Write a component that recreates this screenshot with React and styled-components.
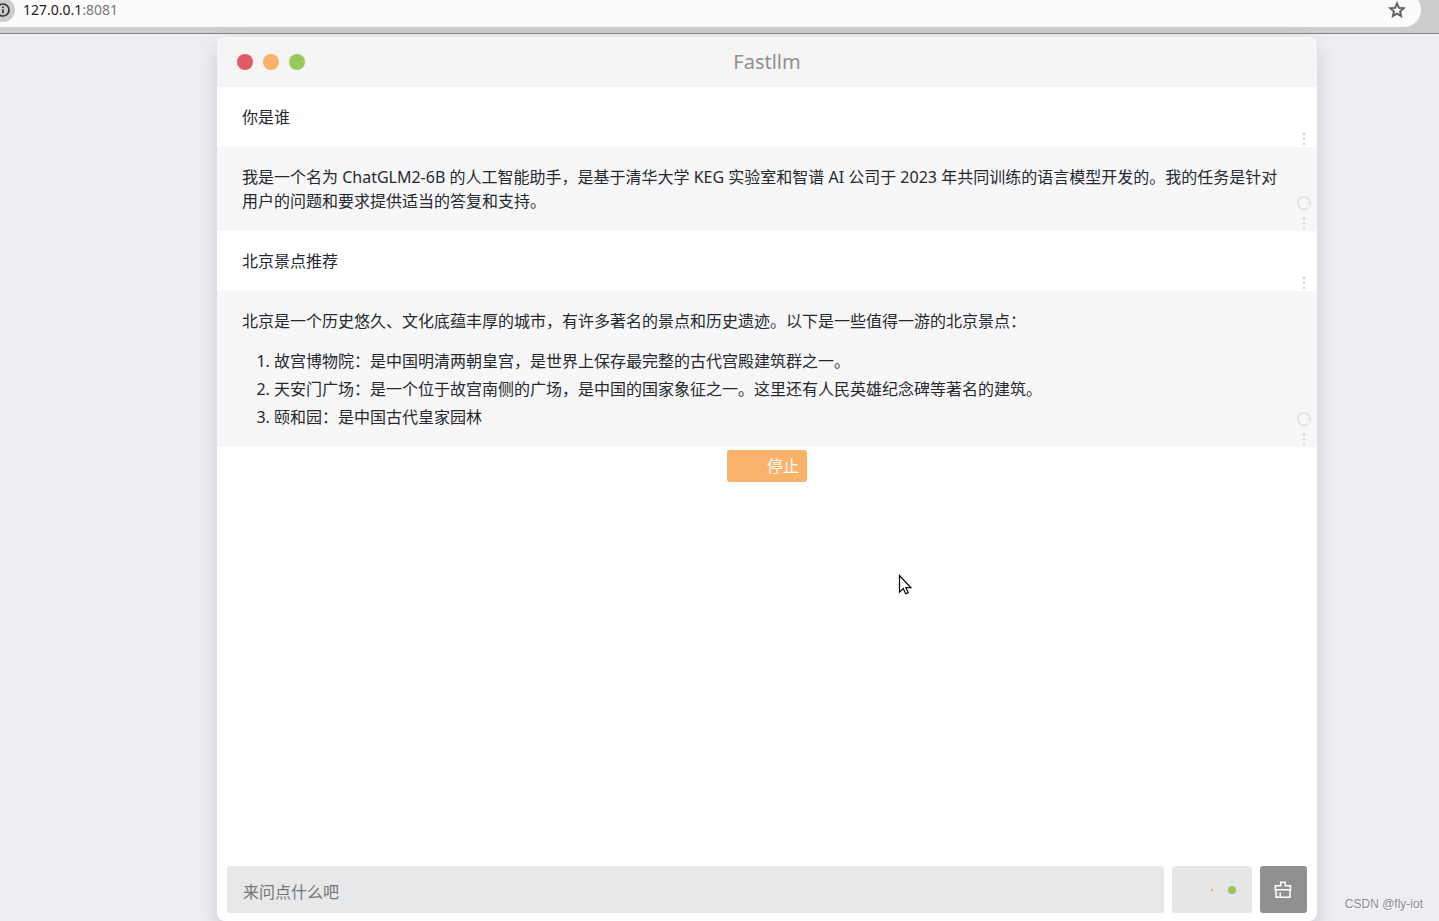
import React, { useState } from 'react';
import styled, { createGlobalStyle } from 'styled-components';

const messages = [
    { id: 1, role: 'user', text: '你是谁' },
    {
        id: 2,
        role: 'assistant',
        text: '我是一个名为 ChatGLM2-6B 的人工智能助手，是基于清华大学 KEG 实验室和智谱 AI 公司于 2023 年共同训练的语言模型开发的。我的任务是针对用户的问题和要求提供适当的答复和支持。',
    },
    { id: 3, role: 'user', text: '北京景点推荐' },
    {
        id: 4,
        role: 'assistant',
        text: '北京是一个历史悠久、文化底蕴丰厚的城市，有许多著名的景点和历史遗迹。以下是一些值得一游的北京景点：',
        items: [
            '故宫博物院：是中国明清两朝皇宫，是世界上保存最完整的古代宫殿建筑群之一。',
            '天安门广场：是一个位于故宫南侧的广场，是中国的国家象征之一。这里还有人民英雄纪念碑等著名的建筑。',
            '颐和园：是中国古代皇家园林',
        ],
    },
];

const InfoIcon = () => (
    <svg width="14" height="14" viewBox="0 0 14 14" fill="none" stroke="#333" strokeWidth="1.7">
        <circle cx="7" cy="7" r="6" />
        <path d="M7 6.2v4M7 3.4v1.7" />
    </svg>
);

const StarIcon = () => (
    <svg width="20" height="20" viewBox="0 0 24 24" fill="#5a5a5a" stroke="#5a5a5a" strokeWidth="0.7">
        <path d="M22 9.24l-7.19-.62L12 2 9.19 8.63 2 9.24l5.46 4.73L5.82 21 12 17.27 18.18 21l-1.63-7.03L22 9.24zM12 15.4l-3.76 2.27 1-4.28-3.32-2.88 4.38-.38L12 6.1l1.71 4.04 4.38.38-3.32 2.88 1 4.28L12 15.4z" />
    </svg>
);

const RefreshIcon = () => (
    <svg width="16" height="16" viewBox="0 0 16 16" fill="none" stroke="#dedede" strokeWidth="1.5">
        <path d="M12.2 12.7A6.2 6.2 0 1 1 14.2 8.2" />
        <path d="M10.8 7.4h4.4v3.6z" fill="#dedede" stroke="none" />
    </svg>
);

const DotsIcon = () => (
    <svg width="16" height="16" viewBox="0 0 16 16" fill="#dcdcdc">
        <circle cx="8" cy="3.2" r="1.4" />
        <circle cx="8" cy="8" r="1.4" />
        <circle cx="8" cy="12.8" r="1.4" />
    </svg>
);

const BrushIcon = () => (
    <svg width="19" height="18" viewBox="0 0 19 18" fill="none" stroke="#fff" strokeWidth="1.5">
        <path d="M6.8 4.7V1.3h4.4v3.4h5.3v4H1.3v-4zM2 8.7v7.6h14V8.7M6.2 16v-4.4" />
    </svg>
);

const PointerIcon = () => (
    <svg width="14" height="22" viewBox="0 0 14 22" fill="#fff" stroke="#000" strokeWidth="1.2">
        <path d="M1.5 1.5v16.6l3.7-3.5 2.5 5.2 2.6-1.2-2.5-5h5z" />
    </svg>
);

const Message = ({ message }) => (
    <MessageRow $role={message.role}>
        <p>{message.text}</p>
        {message.items && (
            <ol>
                {message.items.map((item) => (
                    <li key={item}>{item}</li>
                ))}
            </ol>
        )}
        <MessageTools>
            {message.role === 'assistant' && (
                <ToolButton type="button" aria-label="重新生成">
                    <RefreshIcon />
                </ToolButton>
            )}
            <ToolButton type="button" aria-label="更多">
                <DotsIcon />
            </ToolButton>
        </MessageTools>
    </MessageRow>
);

const App = () => {
    const [question, setQuestion] = useState('');

    return (
        <>
            <GlobalStyle />
            <Screen>
                <BrowserBar>
                    <AddressBox>
                        <SiteInfo type="button" aria-label="网站信息">
                            <InfoIcon />
                        </SiteInfo>
                        <Address>
                            127.0.0.1<Port>:8081</Port>
                        </Address>
                        <PlainButton type="button" aria-label="收藏">
                            <StarIcon />
                        </PlainButton>
                    </AddressBox>
                </BrowserBar>
                <Page>
                    <Window>
                        <TitleBar>
                            <Lights>
                                <Light $color="#e15a64" />
                                <Light $color="#f8b26a" />
                                <Light $color="#99c959" />
                            </Lights>
                            <Title>Fastllm</Title>
                        </TitleBar>
                        <Messages>
                            {messages.map((message) => (
                                <Message key={message.id} message={message} />
                            ))}
                            <StopButton type="button">停止</StopButton>
                        </Messages>
                        <Composer onSubmit={(e) => e.preventDefault()}>
                            <QuestionInput
                                type="text"
                                aria-label="来问点什么吧"
                                placeholder="来问点什么吧"
                                value={question}
                                onChange={(e) => setQuestion(e.target.value)}
                            />
                            <SendButton type="submit" aria-label="发送">
                                <LoadingDot $size={2} $color="#f8b26a" />
                                <LoadingDot $size={8} $color="#99c959" />
                            </SendButton>
                            <ClearButton type="button" aria-label="清空">
                                <BrushIcon />
                            </ClearButton>
                        </Composer>
                    </Window>
                </Page>
                <Pointer>
                    <PointerIcon />
                </Pointer>
                <Watermark>CSDN @fly-iot</Watermark>
            </Screen>
        </>
    );
};

const GlobalStyle = createGlobalStyle`
    * {
        box-sizing: border-box;
    }

    body {
        margin: 0;
        background: #edeef2;
        color: #24292f;
        font: 16px/24px "Noto Sans", "Noto Sans CJK SC", sans-serif;
    }

    button, input {
        font: inherit;
    }

    svg {
        display: block;
    }
`;

const Screen = styled.div`
    position: relative;
    display: flex;
    flex-direction: column;
    min-height: 100vh;
    overflow: hidden;
`;

const PlainButton = styled.button`
    display: flex;
    padding: 0;
    border: none;
    background: none;
    cursor: pointer;
`;

const BrowserBar = styled.header`
    display: flex;
    align-items: flex-end;
    height: 34px;
    padding: 0 18px 6px 0;
    overflow: hidden;
    background: #cdcdcd;
    border-bottom: 1px solid #858585;
`;

const AddressBox = styled.div`
    flex: 1;
    display: flex;
    align-items: center;
    height: 34px;
    padding-right: 14px;
    background: #fcfcfc;
    border-radius: 0 17px 17px 0;
`;

const SiteInfo = styled(PlainButton)`
    align-items: center;
    justify-content: center;
    width: 24px;
    height: 24px;
    margin-left: -9px;
    border-radius: 50%;
    background: #cdcdcd;
`;

const Address = styled.div`
    flex: 1;
    padding-left: 8px;
    font-size: 14px;
    line-height: 20px;
    color: #222;
`;

const Port = styled.span`
    color: #777;
`;

const Page = styled.main`
    flex: 1;
    display: flex;
    padding: 3px 122px 0 217px;
`;

const Window = styled.section`
    flex: 1;
    display: flex;
    flex-direction: column;
    min-width: 0;
    background: #fff;
    border-radius: 8px;
    box-shadow: 0 10px 20px rgba(0, 0, 0, 0.14);
`;

const TitleBar = styled.div`
    display: grid;
    grid-template-columns: 1fr auto 1fr;
    align-items: center;
    height: 50px;
    padding: 0 20px;
    background: #f5f5f5;
    border-radius: 8px 8px 0 0;
`;

const Lights = styled.div`
    display: flex;
    gap: 10px;
`;

const Light = styled.span`
    width: 16px;
    height: 16px;
    border-radius: 50%;
    background: ${({ $color }) => $color};
`;

const Title = styled.h1`
    margin: 0;
    font-size: 20px;
    line-height: 28px;
    font-weight: 400;
    color: #909090;
`;

const Messages = styled.div`
    flex: 1;
    display: flex;
    flex-direction: column;
`;

const MessageRow = styled.article`
    position: relative;
    padding: 18px 25px;
    background: ${({ $role }) => ($role === 'assistant' ? '#f7f7f7' : '#fff')};

    p {
        margin: 0;
    }

    ol {
        margin: 16px 0 0;
        padding-left: 32px;
    }

    li + li {
        margin-top: 4px;
    }
`;

const MessageTools = styled.div`
    position: absolute;
    right: 5px;
    bottom: 0;
    display: flex;
    flex-direction: column;
    gap: 4px;
`;

const ToolButton = styled(PlainButton)`
    width: 16px;
    height: 16px;
`;

const StopButton = styled.button`
    align-self: center;
    width: 80px;
    height: 32px;
    margin-top: 3px;
    padding: 0 8px;
    border: none;
    border-radius: 3px;
    background: #f8b26a;
    color: #fff;
    text-align: right;
    cursor: pointer;
`;

const Composer = styled.form`
    display: flex;
    gap: 8px;
    padding: 8px 10px;
`;

const QuestionInput = styled.input`
    flex: 1;
    min-width: 0;
    height: 47px;
    padding: 4px 16px 0;
    border: none;
    border-radius: 3px;
    background: #e7e8ea;
    color: #24292f;

    &::placeholder {
        color: #757575;
    }
`;

const SendButton = styled.button`
    display: flex;
    align-items: center;
    justify-content: flex-end;
    gap: 15px;
    width: 80px;
    padding: 0 16px;
    border: none;
    border-radius: 3px;
    background: #e6e6e6;
`;

const LoadingDot = styled.span`
    width: ${({ $size }) => $size}px;
    height: ${({ $size }) => $size}px;
    border-radius: ${({ $size }) => ($size > 2 ? '50%' : '0')};
    background: ${({ $color }) => $color};
`;

const ClearButton = styled.button`
    display: flex;
    align-items: center;
    justify-content: center;
    width: 47px;
    padding: 0;
    border: none;
    border-radius: 3px;
    background: #909090;
    cursor: pointer;
`;

const Pointer = styled.div`
    position: absolute;
    left: 898px;
    top: 574px;
    pointer-events: none;
`;

const Watermark = styled.div`
    position: absolute;
    right: 16px;
    bottom: 9px;
    font-family: "Liberation Sans", Arial, sans-serif;
    font-size: 12px;
    line-height: 16px;
    color: #8b8b8d;
    text-shadow: 1px 1px 0 #fff;
`;

export default App;
